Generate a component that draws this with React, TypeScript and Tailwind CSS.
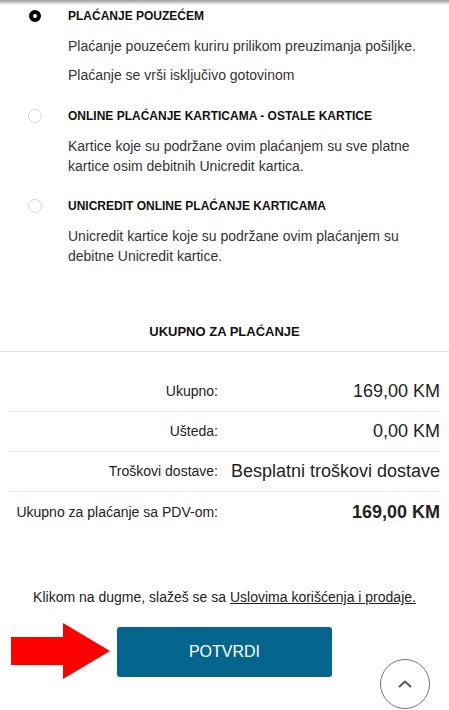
import type { ReactNode } from "react";

type PaymentOption = {
  title: string;
  lines: string[][];
  selected?: boolean;
};

const options: PaymentOption[] = [
  {
    title: "PLAĆANJE POUZEĆEM",
    lines: [["Plaćanje pouzećem kuriru prilikom preuzimanja pošiljke."], ["Plaćanje se vrši isključivo gotovinom"]],
    selected: true,
  },
  {
    title: "ONLINE PLAĆANJE KARTICAMA - OSTALE KARTICE",
    lines: [["Kartice koje su podržane ovim plaćanjem su sve platne kartice osim debitnih Unicredit kartica."]],
  },
  {
    title: "UNICREDIT ONLINE PLAĆANJE KARTICAMA",
    lines: [["Unicredit kartice koje su podržane ovim plaćanjem su debitne Unicredit kartice."]],
  },
];

const totals = [
  { label: "Ukupno:", value: "169,00 KM" },
  { label: "Ušteda:", value: "0,00 KM" },
  { label: "Troškovi dostave:", value: "Besplatni troškovi dostave" },
  { label: "Ukupno za plaćanje sa PDV-om:", value: "169,00 KM", strong: true },
];

function Radio({ selected }: { selected?: boolean }) {
  if (selected) {
    return <span className="mt-[4px] block h-[12px] w-[12px] rounded-full border-[4px] border-black bg-white" />;
  }
  return <span className="mt-[3px] block h-[14px] w-[14px] rounded-full border border-[#d6d6d6] bg-white" />;
}

function Option({ option, children }: { option: PaymentOption; children?: ReactNode }) {
  return (
    <div className="flex">
      <div className="flex w-[68px] justify-start pl-[28px]">
        <div className="flex h-[20px] w-[14px] items-start justify-center">
          <Radio selected={option.selected} />
        </div>
      </div>
      <div className="flex-1 pr-[20px]">
        <div className="text-[12px] font-bold leading-[20px] text-[#111]">{option.title}</div>
        {children}
      </div>
    </div>
  );
}

export default function App() {
  return (
    <div
      className="relative h-[710px] w-[449px] overflow-hidden bg-white text-[#222]"
      style={{ fontFamily: '"Liberation Sans", Arial, sans-serif' }}
    >
      <div className="pointer-events-none absolute inset-x-0 top-0 h-[5px] bg-gradient-to-b from-[#9a9a9a] to-white/0" />

      <div className="pt-[6px]">
        <Option option={options[0]}>
          <p className="mt-[10px] text-[14px] leading-[20px] text-[#333]">{options[0].lines[0]}</p>
          <p className="mt-[9px] text-[14px] leading-[20px] text-[#333]">{options[0].lines[1]}</p>
        </Option>
        <div className="mt-[21px]">
          <Option option={options[1]}>
            <p className="mt-[10px] text-[14px] leading-[20px] text-[#333]">{options[1].lines[0]}</p>
          </Option>
        </div>
        <div className="mt-[20px]">
          <Option option={options[2]}>
            <p className="mt-[10px] text-[14px] leading-[20px] text-[#333]">{options[2].lines[0]}</p>
          </Option>
        </div>
      </div>

      <div className="mt-[56px] text-center text-[13px] font-bold leading-[20px] text-[#111]">UKUPNO ZA PLAĆANJE</div>
      <div className="mt-[9px] border-t border-[#dcdcdc]" />

      <div className="mt-[20px] pl-[8px] pr-[9px]">
        {totals.map((row, i) => (
          <div
            key={row.label}
            className={`grid h-[40px] grid-cols-[210px_1fr] items-center gap-[12px] ${i < totals.length - 1 ? "border-b border-[#ececec]" : ""}`}
          >
            <span className="text-right text-[14px] text-[#222]">{row.label}</span>
            <span className={`whitespace-nowrap text-right text-[18px] text-[#222] ${row.strong ? "font-bold text-[#111]" : ""}`}>
              {row.value}
            </span>
          </div>
        ))}
      </div>

      <p className="mt-[55px] text-center text-[14px] leading-[20px] text-[#222]">
        Klikom na dugme, slažeš se sa <span className="underline">Uslovima korišćenja i prodaje.</span>
      </p>

      <div className="mt-[20px] flex justify-center">
        <button type="button" className="h-[50px] w-[215px] rounded-[3px] bg-[#05668d] text-[16px] text-white">
          POTVRDI
        </button>
      </div>

      {/* red annotation arrow */}
      <svg className="absolute left-[11px] top-[623px]" width="100" height="57" viewBox="0 0 100 57">
        <polygon points="0,14 52,14 52,0 99,28 52,56 52,42 0,42" fill="#ff0000" />
      </svg>

      <button
        type="button"
        aria-label="Na vrh"
        className="absolute left-[380px] top-[659px] flex h-[50px] w-[50px] items-center justify-center rounded-full border border-[#777] bg-white"
      >
        <svg width="16" height="10" viewBox="0 0 16 10">
          <path d="M2 8 L8 2.5 L14 8" fill="none" stroke="#555" strokeWidth="2" />
        </svg>
      </button>
    </div>
  );
}
